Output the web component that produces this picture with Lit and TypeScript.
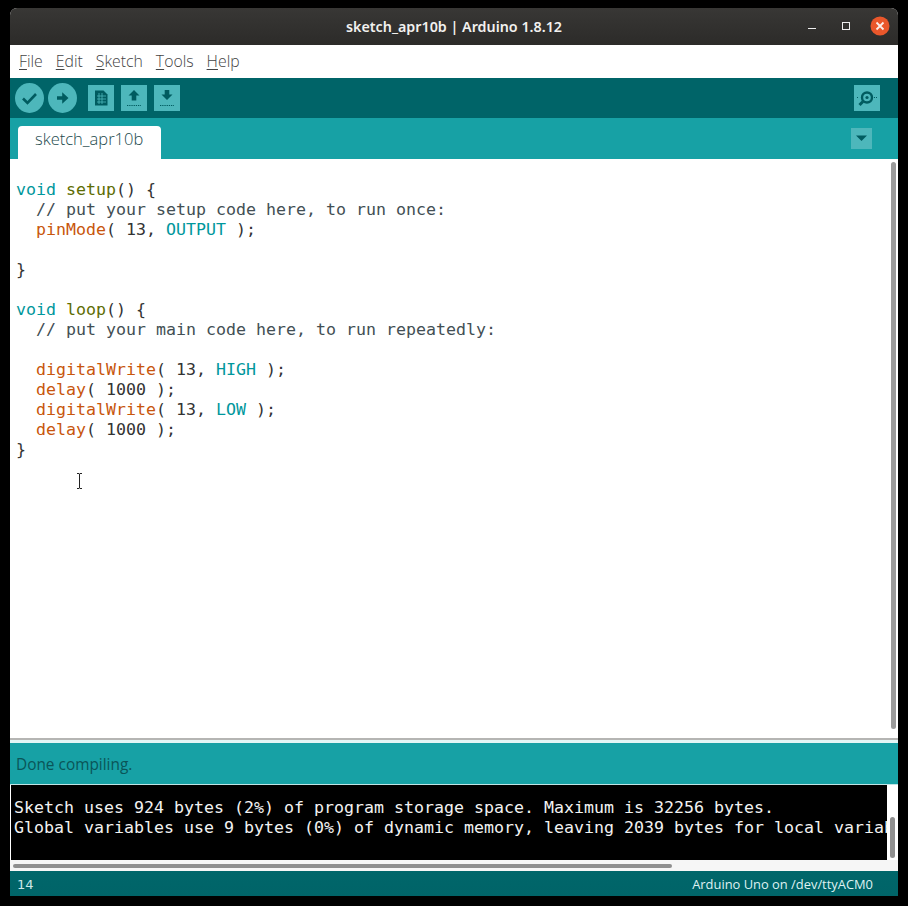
import { LitElement, html, css, svg } from "lit";
import { customElement } from "lit/decorators.js";

const k = (s: string) => html`<span class="kw">${s}</span>`;
const f = (s: string) => html`<span class="fn">${s}</span>`;
const g = (s: string) => html`<span class="setup">${s}</span>`;
const c = (s: string) => html`<span class="const">${s}</span>`;
const m = (s: string) => html`<span class="cm">${s}</span>`;

const lines = [
  html`${k("void")} ${g("setup")}() {`,
  html`  ${m("// put your setup code here, to run once:")}`,
  html`  ${f("pinMode")}( 13, ${c("OUTPUT")} );`,
  html``,
  html`}`,
  html``,
  html`${k("void")} ${g("loop")}() {`,
  html`  ${m("// put your main code here, to run repeatedly:")}`,
  html``,
  html`  ${f("digitalWrite")}( 13, ${c("HIGH")} );`,
  html`  ${f("delay")}( 1000 );`,
  html`  ${f("digitalWrite")}( 13, ${c("LOW")} );`,
  html`  ${f("delay")}( 1000 );`,
  html`}`,
];

const menus = [["F", "ile"], ["E", "dit"], ["S", "ketch"], ["T", "ools"], ["H", "elp"]];

@customElement("app-root")
export class AppRoot extends LitElement {
  static styles = css`
    :host { display: block; background: #000; height: 906px; padding: 8px 10px 10px; box-sizing: border-box; overflow: hidden; }
    .win { width: 888px; height: 888px; display: flex; flex-direction: column; position: relative; background: #fff; border-radius: 7px 7px 0 0; overflow: hidden; }
    .title { height: 37px; flex: none; background: linear-gradient(#383735, #2c2b29); display: flex; align-items: center; justify-content: center; position: relative; color: #f2f1ef; font: 600 14.3px "Noto Sans", sans-serif; }
    .wbtns { position: absolute; top: 0; right: 0; display: flex; align-items: center; }
    .wb { width: 34px; height: 36px; display: flex; align-items: center; justify-content: center; }
    .wb.close { width: 36px; margin-left: -1px; }
    .wb svg { display: block; }
    .menu { height: 33px; flex: none; background: #fff; box-sizing: border-box; padding: 0 0 2px 9px; display: flex; align-items: center; gap: 13px; font: 300 15.8px "Open Sans", sans-serif; color: #444; }
    .menu u { text-underline-offset: 2px; text-decoration-thickness: 1px; }
    .toolbar { height: 40px; flex: none; background: #006468; display: flex; align-items: center; padding: 0 4px 0 5px; }
    .round { width: 29px; height: 30px; margin-right: 4px; display: block; }
    .sq { width: 26px; height: 26px; margin-right: 7px; display: block; }
    .sq.first { margin-left: 7px; }
    .spacer { flex: 1; }
    .serial { margin: 0 14px 0 0; }
    .tabs { height: 41px; flex: none; background: #17a1a5; display: flex; align-items: flex-end; padding-left: 8px; position: relative; }
    .tab { width: 143px; height: 33px; background: #fff; border-radius: 4px 4px 0 0; box-sizing: border-box; padding-left: 17px; font: 300 16.5px/26px "Open Sans", sans-serif; color: #234a4d; }
    .tabmenu { position: absolute; right: 26px; top: 10px; width: 21px; height: 21px; display: block; }
    .editor { height: 579px; flex: none; background: #fff; position: relative; box-sizing: border-box; padding: 21px 0 0 6px; overflow: hidden; }
    pre { margin: 0; font: 16.61px/20px "DejaVu Sans Mono", monospace; color: #333; }
    .kw { color: #00979c; }
    .setup { color: #5e6d03; }
    .fn { color: #c8560d; }
    .const { color: #00979c; }
    .cm { color: #434f54; }
    .vthumb { position: absolute; right: 2px; top: 3px; width: 5px; height: 567px; background: #9a9a9a; border-radius: 3px; }
    .ibeam { position: absolute; left: 66px; top: 314px; width: 7px; height: 16px; display: block; }
    .divider { height: 5px; flex: none; box-sizing: border-box; border-top: 2px solid #b5b5b3; background: #e3f6f6; }
    .status { height: 42px; flex: none; background: #17a1a5; box-sizing: border-box; padding-left: 6px; border-bottom: 1px solid #bfe3e4; font: 400 15.4px/44px "Open Sans", sans-serif; color: #0a5558; }
    .consolewrap { height: 75px; flex: none; display: flex; background: #fff; position: relative; }
    .console { width: 876px; margin-left: 1px; background: #000; overflow: hidden; box-sizing: border-box; padding: 13px 0 0 3px; }
    .console pre { color: #f2f2f2; }
    .cthumb { position: absolute; right: 3px; top: 32px; width: 5px; height: 41px; background: #8f8f8f; border-radius: 3px; }
    .hbar { height: 11px; flex: none; background: #f6f6f6; position: relative; }
    .hthumb { position: absolute; left: 3px; top: 4px; width: 659px; height: 4px; background: #8f8f8f; border-radius: 2px; }
    .foot { height: 25px; flex: none; background: linear-gradient(#00666a, #006468); display: flex; align-items: center; justify-content: space-between; padding: 0 25px 0 7px; color: #dff1f1; font: 400 12.9px "Open Sans", sans-serif; }
    .foot .num { font: 400 13px/1 "DejaVu Sans", sans-serif; padding-top: 2px; color: #cfe8e8; }
  `;

  private sq(inner: unknown, cls = "") {
    return html`<svg class="sq ${cls}" viewBox="0 0 26 26"><rect width="26" height="26" fill="#4db7bb"/>${inner}</svg>`;
  }

  render() {
    const dark = "#005c60";
    return html`<div class="win">
      <div class="title">sketch_apr10b | Arduino 1.8.12
        <div class="wbtns">
          <div class="wb"><svg width="10" height="10" viewBox="0 0 10 10"><rect x="1" y="7" width="8" height="1" fill="#eee"/></svg></div>
          <div class="wb"><svg width="10" height="10" viewBox="0 0 10 10"><rect x="1.5" y="1.5" width="7" height="7" fill="none" stroke="#eee" stroke-width="1"/></svg></div>
          <div class="wb close"><svg width="20" height="20" viewBox="0 0 20 20"><circle cx="10" cy="10" r="9.500" fill="#e9572b"/><path d="M6.500 6.500l7 7M13.500 6.500l-7 7" stroke="#fbeee9" stroke-width="1.800"/></svg></div>
        </div>
      </div>
      <div class="menu">${menus.map(([a, b]) => html`<span><u>${a}</u>${b}</span>`)}</div>
      <div class="toolbar">
        <svg class="round" viewBox="0 0 29 30"><ellipse cx="14.500" cy="15" rx="14.500" ry="15" fill="#4db7bb"/><path d="M8 15.500l4.500 4.500 8.500-9" fill="none" stroke="${dark}" stroke-width="2.600"/></svg>
        <svg class="round" viewBox="0 0 29 30"><ellipse cx="14.500" cy="15" rx="14.500" ry="15" fill="#4db7bb"/><path d="M9 13.300h5.200v-4l6.300 5.700-6.300 5.700v-4H9z" fill="${dark}"/></svg>
        ${this.sq(svg`<path d="M7 5.500h8.500l4 4v11H7z" fill="${dark}"/><path d="M9 11h9M9 14h9M9 17h9M11 8v11M14 8v11" stroke="#4db7bb" stroke-width=".8"/>`, "first")}
        ${this.sq(svg`<path d="M13 5l5.500 5.500h-3.200v5h-4.600v-5H7.500z" fill="${dark}"/><path d="M6 20.500h14" stroke="${dark}" stroke-width="1" stroke-dasharray="1.300 .9"/>`)}
        ${this.sq(svg`<path d="M13 15l5.500-5.500h-3.200V5h-4.600v4.500H7.500z" fill="${dark}"/><path d="M6 20.500h14" stroke="${dark}" stroke-width="1" stroke-dasharray="1.300 .9"/>`)}
        <div class="spacer"></div>
        <svg class="sq serial" viewBox="0 0 26 26"><rect width="26" height="26" fill="#4db7bb"/><circle cx="13" cy="12.500" r="5" fill="none" stroke="${dark}" stroke-width="2.400"/><circle cx="13" cy="12.500" r="1.600" fill="${dark}"/><path d="M9 16.500l-3.500 3.500" stroke="${dark}" stroke-width="3"/><path d="M20 12.500h4M3 12.500h2" stroke="${dark}" stroke-width="1" stroke-dasharray="1 1"/></svg>
      </div>
      <div class="tabs">
        <div class="tab">sketch_apr10b</div>
        <svg class="tabmenu" viewBox="0 0 21 21"><rect width="21" height="21" fill="#4db7bb"/><path d="M5 7.500h11l-5.500 5.500z" fill="${dark}"/></svg>
      </div>
      <div class="editor">
        <pre>${lines.map((l) => html`${l}\n`)}</pre>
        <div class="vthumb"></div>
        <svg class="ibeam" viewBox="0 0 7 16"><path d="M1 .5h2l.5.5.5-.5h2M3.500 1v14M1 15.500h2l.5-.5.5.5h2" fill="none" stroke="#222" stroke-width="1"/></svg>
      </div>
      <div class="divider"></div>
      <div class="status">Done compiling.</div>
      <div class="consolewrap">
        <div class="console"><pre>Sketch uses 924 bytes (2%) of program storage space. Maximum is 32256 bytes.
Global variables use 9 bytes (0%) of dynamic memory, leaving 2039 bytes for local variables. Maximum is 2048 bytes.</pre></div>
        <div class="cthumb"></div>
      </div>
      <div class="hbar"><div class="hthumb"></div></div>
      <div class="foot"><span class="num">14</span><span>Arduino Uno on /dev/ttyACM0</span></div>
    </div>`;
  }
}
